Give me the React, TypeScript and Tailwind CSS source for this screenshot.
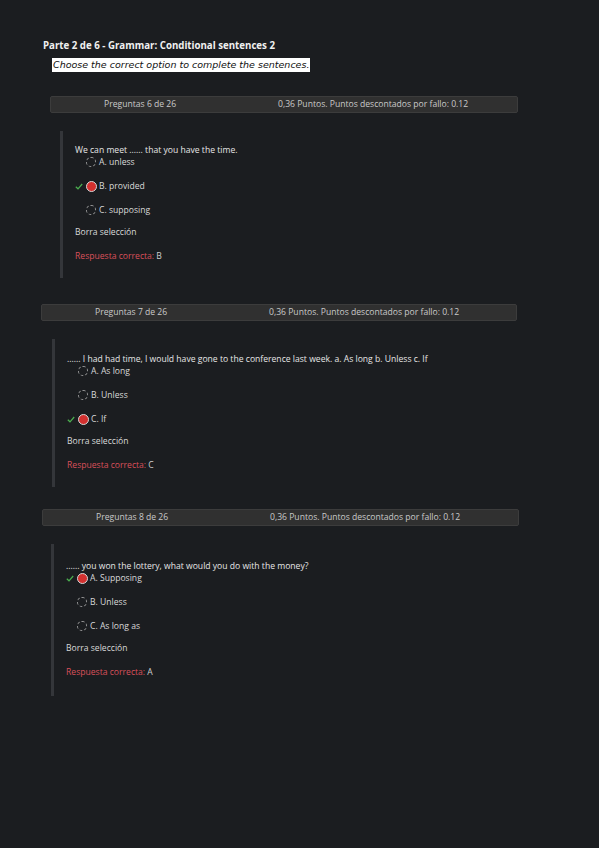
import React from "react";

type Option = { label: string; selected?: boolean };

interface QuestionProps {
    number: number;
    text: string;
    options: Option[];
    answer: string;
    headerClass: string;
    boxClass: string;
}

const Radio = ({ selected }: { selected?: boolean }) =>
    selected ? (
        <span className="block h-[11px] w-[11px] rounded-full border border-[#d8d8d8] bg-[#d3302f]" />
    ) : (
        <span className="block h-[10px] w-[10px] rounded-full border-[1.5px] border-dashed border-[#9a9a9a]" />
    );

const Check = () => (
    <svg width="8" height="7" viewBox="0 0 8 7" className="shrink-0">
        <path d="M0.8 3.8 L3 5.8 L7.2 1" fill="none" stroke="#4caf50" strokeWidth="1.2" />
    </svg>
);

const Question = ({ number, text, options, answer, headerClass, boxClass }: QuestionProps) => {
    return (
        <section>
            <div
                className={`flex h-[17px] items-center rounded-[2px] border border-[#3c3c3c] bg-[#303030] text-[8.6px] text-[#c9c9c9] ${headerClass}`}
            >
                <span className="w-[227px] shrink-0 pl-[53px]">Preguntas {number} de 26</span>
                <span>0,36 Puntos. Puntos descontados por fallo: 0.12</span>
            </div>
            <div className={`mt-[18px] flex flex-col border-l-[3px] border-[#34363a] pl-3 ${boxClass}`}>
                <p className="h-3 whitespace-nowrap leading-3 text-[#e6e6e6]">{text}</p>
                <div className="flex flex-col gap-3">
                    {options.map((o) => (
                        <div key={o.label} className="flex h-3 items-center">
                            <span className="flex w-[11px] justify-start">{o.selected && <Check />}</span>
                            <span className="flex w-[13px] items-center">
                                <Radio selected={o.selected} />
                            </span>
                            <span className="leading-3 text-[#d9d9d9]">{o.label}</span>
                        </div>
                    ))}
                </div>
                <p className="mt-[10px] h-3 leading-3 text-[#d9d9d9]">Borra selección</p>
                <p className="mt-3 h-3 leading-3">
                    <span className="text-[#d9505a]">Respuesta correcta:</span>
                    <span className="text-[#cfcfcf]"> {answer}</span>
                </p>
            </div>
        </section>
    );
};

export default function App() {
    return (
        <div
            className="min-h-screen w-full bg-[#1b1d20] pb-10 pt-[40px] text-[8.6px]"
            style={{ fontFamily: '"Open Sans", "Noto Sans", sans-serif' }}
        >
            <h1 className="ml-[43px] h-3 text-[9.7px] font-bold leading-3 text-[#f0f0f0]">
                Parte 2 de 6 - Grammar: Conditional sentences 2
            </h1>
            <div className="ml-[52px] mt-[6px] inline-flex h-[14px] items-center bg-white px-[1px] font-['DejaVu_Sans',sans-serif] text-[9.5px] italic text-[#111]">
                Choose the correct option to complete the sentences.
            </div>

            <div className="mt-6 flex flex-col">
                <Question
                    number={6}
                    text="We can meet ...... that you have the time."
                    options={[{ label: "A. unless" }, { label: "B. provided", selected: true }, { label: "C. supposing" }]}
                    answer="B"
                    headerClass="ml-[50px] w-[468px]"
                    boxClass="ml-[60px] pt-[13px] pb-4"
                />
                <div className="h-[26px]" />
                <Question
                    number={7}
                    text="...... I had had time, I would have gone to the conference last week. a. As long b. Unless c. If"
                    options={[{ label: "A. As long" }, { label: "B. Unless" }, { label: "C. If", selected: true }]}
                    answer="C"
                    headerClass="ml-[41px] w-[476px]"
                    boxClass="ml-[52px] pt-[14px] pb-4"
                />
                <div className="h-[22px]" />
                <Question
                    number={8}
                    text="...... you won the lottery, what would you do with the money?"
                    options={[{ label: "A. Supposing", selected: true }, { label: "B. Unless" }, { label: "C. As long as" }]}
                    answer="A"
                    headerClass="ml-[42px] w-[477px]"
                    boxClass="ml-[51px] pt-[16px] pb-[18px]"
                />
            </div>
        </div>
    );
}
